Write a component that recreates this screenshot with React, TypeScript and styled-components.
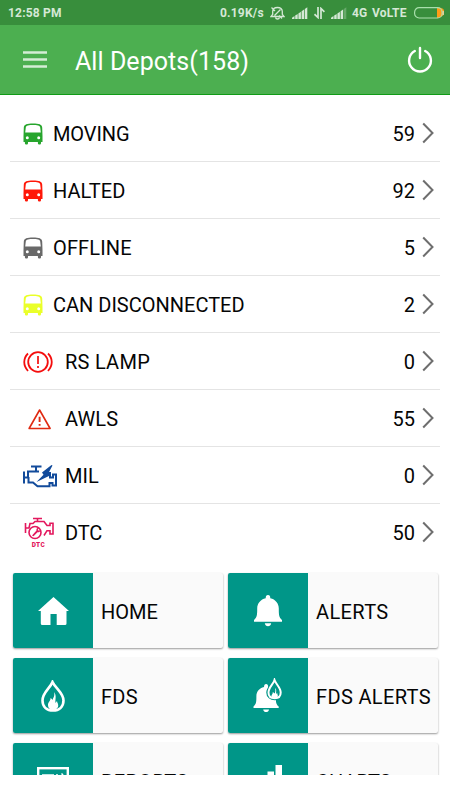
import React from 'react';
import styled, { createGlobalStyle } from 'styled-components';

const GlobalStyle = createGlobalStyle`
  * { box-sizing: border-box; }
  body { margin: 0; background: #fff; font-family: Roboto, sans-serif; color: #050505; }
  svg { display: block; flex: none; }
`;

const Screen = styled.div`
  width: 450px;
  height: 800px;
  overflow: hidden;
  background: #fff;
`;

const StatusBar = styled.div`
  height: 25px;
  padding: 0 6px 0 8px;
  background: #388e3c;
  color: #d5e8d6;
  display: flex;
  align-items: center;
  font-size: 12px;
  font-weight: 700;
  letter-spacing: 0.2px;
  white-space: nowrap;
`;

const Clock = styled.span`
  flex: 1;
`;

const StatusText = styled.span<{ $width: number; $gap: number }>`
  width: ${(p) => p.$width}px;
  margin-right: ${(p) => p.$gap}px;
`;

const StatusIcon = styled.svg<{ $gap: number }>`
  margin-right: ${(p) => p.$gap}px;
`;

const AppBar = styled.header`
  height: 70px;
  padding: 0 17px 0 23px;
  background: #4caf50;
  border-bottom: 1px solid #109b16;
  color: #fff;
  display: flex;
  align-items: center;
`;

const Title = styled.h1`
  flex: 1;
  margin: 4px 0 0 28px;
  font-size: 25px;
  font-weight: 400;
  letter-spacing: 0.06px;
`;

const Content = styled.main`
  height: 680px;
  padding: 10px 10px 0;
  overflow: hidden;
`;

const Row = styled.div`
  height: 57px;
  padding: 0 6px 0 12.5px;
  border-bottom: 1px solid #e4e4e4;
  display: flex;
  align-items: center;
  font-size: 20px;
  &:last-child { border-bottom-color: transparent; }
`;

const RowIcon = styled.div<{ $wide: boolean }>`
  width: ${(p) => (p.$wide ? 42.5 : 30.5)}px;
  height: 36px;
  padding-top: 1px;
  display: flex;
  align-items: center;
`;

const RowLabel = styled.span<{ $spacing: number }>`
  flex: 1;
  padding-top: 1px;
  letter-spacing: ${(p) => p.$spacing}px;
`;

const Count = styled.span`
  padding-top: 1px;
  margin-right: 7px;
`;

const Cards = styled.div`
  display: grid;
  grid-template-columns: 210px 210px;
  grid-auto-rows: 75px;
  gap: 10px 5px;
  padding: 12px 0 0 3px;
`;

const Card = styled.div`
  display: flex;
  align-items: center;
  background: #fafafa;
  border-radius: 2px;
  box-shadow: 0 1px 2px rgba(0, 0, 0, 0.4);
  font-size: 20px;
  overflow: hidden;
  white-space: nowrap;
`;

const Tile = styled.div`
  width: 80px;
  height: 75px;
  margin-right: 8px;
  flex: none;
  background: #009688;
  display: flex;
  align-items: center;
  justify-content: center;
`;

const CardLabel = styled.span<{ $spacing: number }>`
  padding-top: 2px;
  letter-spacing: ${(p) => p.$spacing}px;
`;

const Bus = ({ color }: { color: string }) => (
  <svg width="20" height="22" viewBox="0 0 20 22">
    <path
      fill={color}
      fillRule="evenodd"
      d="M.8 4.500C1 1.300 4 .4 10 .4s9 .9 9.200 4.100L19.500 13v6H18v1.300q0 1.200-1.200 1.200h-.7q-1.200 0-1.200-1.200V19H5v1.300q0 1.200-1.200 1.200h-.7q-1.200 0-1.200-1.200V19H.5v-6zM2.800 4.600 2.200 9.400h15.600l-.6-4.800C17 2.400 14 2 10 2s-7 .4-7.200 2.600zM4.300 13.200a1.500 1.500 0 1 0 0 3 1.500 1.500 0 0 0 0-3zm11.400 0a1.500 1.500 0 1 0 0 3 1.500 1.500 0 0 0 0-3z"
    />
  </svg>
);

const BrakeLamp = () => (
  <svg width="30" height="24" viewBox="0 0 30 24" fill="none" stroke="#f40d0d" strokeWidth="1.800">
    <circle cx="15" cy="12" r="9.800" />
    <path d="M15 6v8m0 2v2" strokeWidth="1.700" />
    <path d="M5 3.500C0 8.500 0 15.500 5 21M25 3.500C30 8.500 30 15.500 25 21" />
  </svg>
);

const Warning = () => (
  <svg width="30" height="22" viewBox="0 0 30 22" fill="none" stroke="#e02a12" strokeWidth="1.600">
    <path d="M16.600 2 6.100 20.500h21z" strokeLinejoin="round" />
    <path d="M16.600 8.700V14m0 2v1.700" strokeWidth="1.900" />
  </svg>
);

const EngineBolt = () => (
  <svg width="36" height="24" viewBox="0 0 36 24" fill="none" stroke="#124b9b" strokeWidth="2">
    <path d="M8 2.500h10.500M13 3v4M1 7.500v12M1 13.500h4V7.500h11M5.500 13v5.500h4.500l4.500 3.700h12v-3.200h3v2.500h3.500V10.500H30v3h-3V9h-3" />
    <path d="M28.500 1 19 8.500l1.500 2.200L13.500 18l13.500-6.500-1.500-2.500 4-7.500z" fill="#124b9b" stroke="none" />
  </svg>
);

const DtcMark = styled.span`
  height: 6px;
  font-size: 6.500px;
  line-height: 6px;
  font-weight: 900;
  letter-spacing: 0.5px;
  color: #e3175d;
`;

const DtcStack = styled.div`
  width: 32px;
  height: 31px;
  display: flex;
  flex-direction: column;
  align-items: center;
  gap: 2px;
`;

const EngineCheck = () => (
  <DtcStack>
    <svg width="32" height="23" viewBox="0 0 32 23" fill="none" stroke="#e3175d" strokeWidth="1.600">
      <path d="M10 1.500h9M14.500 2v3M2.500 6v10M2.500 11H6l1-4.500h3L12 4.500h9l3 4h3V6.300h3V17h-3v-3.300h-3L21 18.500" />
      <circle cx="12" cy="15.500" r="6" />
      <path d="m9 18.500 4.500-5c-.5-2 1-3 2.500-2.600l-1.200 1.800 1 1 1.500-.8c0 2-1.400 2.700-2.800 2.300l-4 4z" fill="#e3175d" stroke="none" />
    </svg>
    <DtcMark>DTC</DtcMark>
  </DtcStack>
);

const Chevron = () => (
  <svg width="12" height="22" viewBox="0 0 12 22" fill="none" stroke="#6e6e6e" strokeWidth="2">
    <path d="m1.200 1.500 9.300 9.500-9.300 9.500" />
  </svg>
);

const Signal = ({ bars, gap }: { bars: number; gap: number }) => (
  <StatusIcon $gap={gap} width="16" height="12" viewBox="0 0 16 12" fill="#d5e8d6">
    {[0, 1, 2, 3, 4].map((i) => (
      <path
        key={i}
        opacity={i < bars ? 1 : 0.3}
        d={`M${i * 3.2} ${10.800 - i * 2.200}l2.500-1.700V12h-2.500z`}
      />
    ))}
  </StatusIcon>
);

const Silent = () => (
  <StatusIcon $gap={7} width="15" height="14" viewBox="0 0 15 14" fill="none" stroke="#d5e8d6" strokeWidth="1.300">
    <path d="M1 10.500h13l-1.700-2.200V5.500C12.300 3 10.500 1.500 7.500 1.500S2.700 3 2.700 5.500v2.800zM5.500 11.500c.5 2 3.500 2 4 0M1.500 1.500 5 5M9 9.500l3 3M10.500 3.500 4.500 9.500" />
  </StatusIcon>
);

const DataArrows = () => (
  <StatusIcon $gap={6} width="11" height="12" viewBox="0 0 11 12" fill="none" stroke="#d5e8d6" strokeWidth="1.700">
    <path d="M4 0v10.500L.5 7.200M7 12V1.500l3.400 3.300" />
  </StatusIcon>
);

const Battery = () => (
  <svg width="30" height="12" viewBox="0 0 30 12">
    <path d="M23 1h1.500a4.500 4.500 0 0 1 3 8.500L24.500 11H23z" fill="#ff9c16" />
    <rect x=".6" y=".7" width="27.500" height="10.300" rx="4.500" fill="none" stroke="#a9dfac" strokeWidth="1.200" />
    <path d="M29.200 4v4" stroke="#d5e8d6" />
  </svg>
);

const House = () => (
  <svg width="31" height="28" viewBox="0 0 31 28" fill="#fff">
    <path d="M15.500 0 31 14h-2.500v12.500q0 1.500-1.500 1.500h-8.300V17h-6.200v11H4.300q-1.500 0-1.500-1.500V14H0z" />
  </svg>
);

const bellPath =
  'M14 0q2.300 0 2.300 3.300C21.500 4.400 24.800 8.500 24.800 13.500c0 7 .2 8.500 3.200 11.500v1.700H0V25c3-3 3.200-4.500 3.200-11.500 0-5 3.300-9.100 8.500-10.200Q11.700 0 14 0zM10.800 28.200h6.400c-.4 4-6 4-6.400 0z';

const Bell = () => (
  <svg width="28" height="32" viewBox="0 0 28 32" fill="#fff">
    <path d={bellPath} />
  </svg>
);

const Flame = () => (
  <svg width="24" height="32" viewBox="0 0 24 32">
    <path d="M11.500 2C9 8.500 1.500 12.500 1.500 20.500c0 6.500 4.500 10 10.500 10s10.500-3.500 10.500-10C22.500 13 14.500 8.500 11.500 2z" fill="none" stroke="#fff" strokeWidth="2.600" />
    <path d="M13 12c1 4-.5 5-1.500 8-.6-1-1-1.500-2-2 .2 3-2.500 4-2.500 7 0 3.500 2.500 5 5 5s5.500-1.500 5.200-5c-.2-2-1-2-1.200-4l-1.500 2c-.5-4 1.500-7-1.500-11z" fill="#fff" />
  </svg>
);

const BellFlame = () => (
  <svg width="30" height="36" viewBox="0 0 30 36">
    <g transform="translate(.5 6) scale(.9)" fill="#fff">
      <path d={bellPath} />
    </g>
    <path d="M21.500 2C20.500 6 15 10 15 14.500c0 4 3 6 6.700 6s6.500-2 6.500-6c0-5-5.500-8.500-6.700-12.500z" fill="#009688" stroke="#009688" strokeWidth="3.500" />
    <path d="M21.500 2C20.500 6 15.500 9.500 15.500 14.500c0 4 2.700 5.700 6.200 5.700s6-1.700 6-5.700c0-5-5-8.500-6.200-12.500z" fill="#009688" stroke="#fff" strokeWidth="2" />
    <path d="M22 10c1 3 0 4-.2 5.500l-2-1.500c.3 2-1.500 2.600-1.400 4.300.6 2.200 6.200 2.500 6.500-.2 0-1.500-.7-2-.7-3.400l-1 1.300c-.4-2 .8-4.500-1.200-6z" fill="#fff" />
  </svg>
);

const Report = () => (
  <svg width="32" height="28" viewBox="0 0 32 28" fill="none" stroke="#fff">
    <rect x="1.200" y="1.200" width="29.600" height="25.600" strokeWidth="2.400" />
    <path d="M5 8h12M19 8h2M24.500 6.500l1.500 1.500M5 12h12M5 16h12M5 20h12M21 20v-7l5-6" strokeWidth="1.500" />
  </svg>
);

const Chart = () => (
  <svg width="28" height="31" viewBox="0 0 28 31" fill="#fff">
    <path d="M0 17h6v14H0zM13.500 6.500h6.500V31h-6.500zM7 12h6v19H7zM21.500 0H28v31h-6.500z" />
  </svg>
);

const rows = [
  { label: 'MOVING', count: 59, spacing: -0.1, icon: <Bus color="#27a52d" /> },
  { label: 'HALTED', count: 92, spacing: 0.05, icon: <Bus color="#ff1708" /> },
  { label: 'OFFLINE', count: 5, spacing: 0.15, icon: <Bus color="#696969" /> },
  { label: 'CAN DISCONNECTED', count: 2, spacing: 0, icon: <Bus color="#eaff2a" /> },
  { label: 'RS LAMP', count: 0, spacing: 0.25, icon: <BrakeLamp />, wide: true },
  { label: 'AWLS', count: 55, spacing: 0.1, icon: <Warning />, wide: true },
  { label: 'MIL', count: 0, spacing: 0.1, icon: <EngineBolt />, wide: true },
  { label: 'DTC', count: 50, spacing: -0.1, icon: <EngineCheck />, wide: true },
];

const cards = [
  { label: 'HOME', spacing: 0, icon: <House /> },
  { label: 'ALERTS', spacing: 0.35, icon: <Bell /> },
  { label: 'FDS', spacing: 0.3, icon: <Flame /> },
  { label: 'FDS ALERTS', spacing: 0.35, icon: <BellFlame /> },
  { label: 'REPORTS', spacing: 0.35, icon: <Report /> },
  { label: 'CHARTS', spacing: 0, icon: <Chart /> },
];

export default function App() {
  return (
    <Screen>
      <GlobalStyle />
      <StatusBar>
        <Clock>12:58 PM</Clock>
        <StatusText $width={44} $gap={6}>0.19K/s</StatusText>
        <Silent />
        <Signal bars={5} gap={6} />
        <DataArrows />
        <Signal bars={4} gap={5} />
        <StatusText $width={15} $gap={5}>4G</StatusText>
        <StatusText $width={36} $gap={6}>VoLTE</StatusText>
        <Battery />
      </StatusBar>
      <AppBar>
        <svg width="24" height="17" viewBox="0 0 24 17" stroke="#d4edd5" strokeWidth="2.300">
          <path d="M0 1.500h24M0 8.500h24M0 15.500h24" />
        </svg>
        <Title>All Depots(158)</Title>
        <svg width="26" height="28" viewBox="0 0 26 28" fill="none" stroke="#fff" strokeWidth="2.400" strokeLinecap="round">
          <path d="M13 2v10M7.800 5a10.900 10.900 0 1 0 10.400 0" />
        </svg>
      </AppBar>
      <Content>
        <div>
          {rows.map((r) => (
            <Row key={r.label}>
              <RowIcon $wide={!!r.wide}>{r.icon}</RowIcon>
              <RowLabel $spacing={r.spacing}>{r.label}</RowLabel>
              <Count>{r.count}</Count>
              <Chevron />
            </Row>
          ))}
        </div>
        <Cards>
          {cards.map((c) => (
            <Card key={c.label}>
              <Tile>{c.icon}</Tile>
              <CardLabel $spacing={c.spacing}>{c.label}</CardLabel>
            </Card>
          ))}
        </Cards>
      </Content>
    </Screen>
  );
}
